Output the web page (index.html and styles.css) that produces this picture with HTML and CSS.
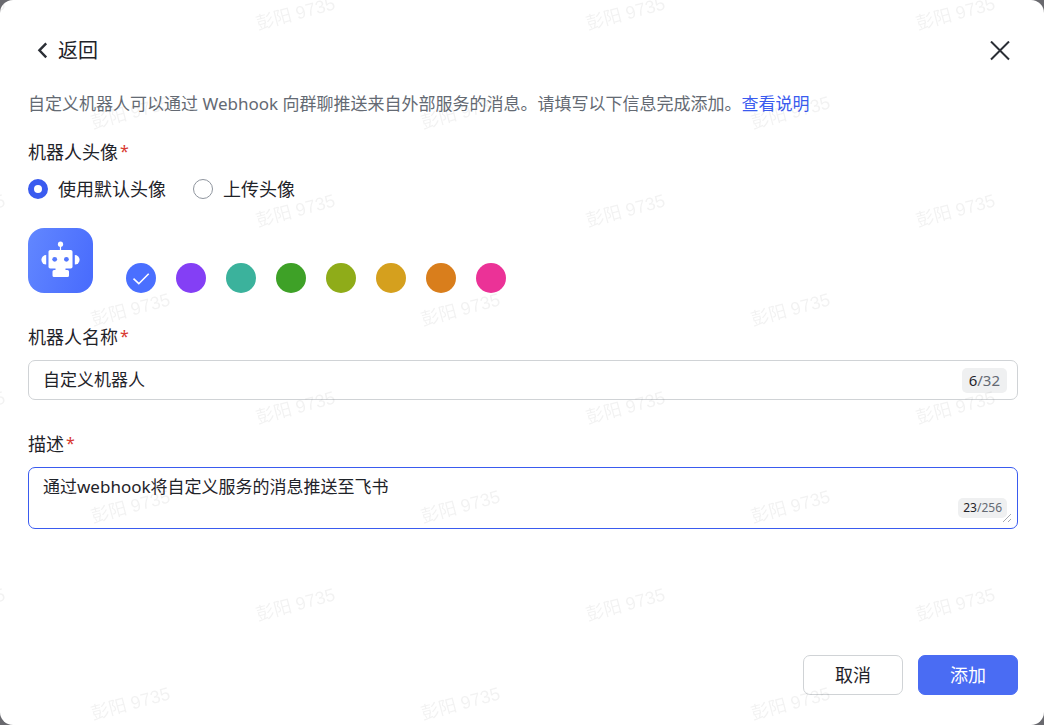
FILE: index.html
```html
<!DOCTYPE html>
<html lang="zh-CN">
<head>
<meta charset="utf-8">
<meta name="viewport" content="width=device-width, initial-scale=1">
<title>自定义机器人</title>
<link rel="stylesheet" href="styles.css">
</head>
<body>
<main class="dialog">
  <header class="header">
    <button class="back" type="button">
      <svg class="back-icon" viewBox="0 0 20 20" aria-hidden="true"><path d="M13.200 2.300 6.400 9.300l6.800 7"/></svg>
      <span>返回</span>
    </button>
    <button class="close" type="button" aria-label="关闭">
      <svg class="close-icon" viewBox="0 0 20 20" aria-hidden="true"><path d="M1 .5 19 18.500M19 .5 1 18.500"/></svg>
    </button>
  </header>

  <form class="form">
    <p class="intro">自定义机器人可以通过 Webhook 向群聊推送来自外部服务的消息。请填写以下信息完成添加。<a class="link" href="#">查看说明</a></p>

    <fieldset class="group">
      <legend class="label">机器人头像<span class="required">*</span></legend>
      <div class="options">
        <label class="option"><input class="radio" type="radio" name="source" checked><span>使用默认头像</span></label>
        <label class="option"><input class="radio" type="radio" name="source"><span>上传头像</span></label>
      </div>
      <div class="avatar-row">
        <svg class="avatar" viewBox="0 0 65 65" role="img" aria-label="机器人">
          <defs>
            <linearGradient id="avatar-fill" x1="0" y1="0.3" x2="1" y2="0.6">
              <stop offset="0" stop-color="#6085ff"/>
              <stop offset="1" stop-color="#4a6dfd"/>
            </linearGradient>
          </defs>
          <rect width="65" height="65" rx="16" fill="url(#avatar-fill)"/>
          <g fill="#fff">
            <circle cx="32.500" cy="16.200" r="2.600"/>
            <rect x="31.900" y="18" width="1.200" height="5"/>
            <rect x="20.500" y="22" width="24" height="18.500" rx="1.800"/>
            <path d="M18.200 27v9.600a4.800 4.800 0 0 1 0-9.600z"/>
            <path d="M46.800 27v9.600a4.800 4.800 0 0 0 0-9.600z"/>
            <path d="M27.500 40h10v2h2a1.500 1.500 0 0 1 1.500 1.500v4a1.500 1.500 0 0 1-1.500 1.500h-13.500a1.500 1.500 0 0 1-1.500-1.500v-4a1.500 1.500 0 0 1 1.500-1.500h1.500z"/>
          </g>
          <circle cx="26.700" cy="31.300" r="2.400" fill="#5579fe"/>
          <circle cx="38.400" cy="31.300" r="2.400" fill="#5276fe"/>
        </svg>
        <div class="swatches">
          <label class="swatch-item">
            <input class="swatch blue" type="radio" name="color" aria-label="蓝色" checked>
            <svg class="check" viewBox="0 0 30 30" aria-hidden="true"><path d="M7.500 15.700l5.300 5L22.700 10.800"/></svg>
          </label>
          <input class="swatch purple" type="radio" name="color" aria-label="紫色">
          <input class="swatch teal" type="radio" name="color" aria-label="青色">
          <input class="swatch green" type="radio" name="color" aria-label="绿色">
          <input class="swatch olive" type="radio" name="color" aria-label="黄绿色">
          <input class="swatch yellow" type="radio" name="color" aria-label="黄色">
          <input class="swatch orange" type="radio" name="color" aria-label="橙色">
          <input class="swatch pink" type="radio" name="color" aria-label="粉色">
        </div>
      </div>
    </fieldset>

    <div class="group">
      <label class="label" for="name">机器人名称<span class="required">*</span></label>
      <div class="field">
        <input class="input" id="name" type="text" value="自定义机器人" maxlength="32">
        <span class="count">6<span class="limit">/32</span></span>
      </div>
    </div>

    <div class="group">
      <label class="label" for="desc">描述<span class="required">*</span></label>
      <div class="field field-area">
        <textarea class="input area" id="desc" rows="2" maxlength="256">通过webhook将自定义服务的消息推送至飞书</textarea>
        <span class="count count-small">23<span class="limit">/256</span></span>
        <svg class="grip" viewBox="0 0 10 10" aria-hidden="true"><path d="M1 9 9 1M6 9 9 6"/></svg>
      </div>
    </div>

    <footer class="actions">
      <button class="button" type="button">取消</button>
      <button class="button primary" type="submit">添加</button>
    </footer>
  </form>

  <svg class="watermark" aria-hidden="true">
    <defs>
      <pattern id="mark" x="60" y="-20" width="330" height="197" patternUnits="userSpaceOnUse">
        <text class="mark-text" transform="translate(198 50) rotate(-15)">彭阳 9735</text>
        <text class="mark-text" transform="translate(33 149) rotate(-15)">彭阳 9735</text>
      </pattern>
    </defs>
    <rect width="100%" height="100%" fill="url(#mark)"/>
  </svg>
</main>
</body>
</html>
```
FILE: styles.css
```css
* {
  box-sizing: border-box;
}

body {
  margin: 0;
  background: #69696e;
  color: #1f2329;
  font-family: "Noto Sans", "Noto Sans CJK SC", sans-serif;
  font-size: 18px;
  line-height: 28px;
}

button,
input,
textarea {
  margin: 0;
  color: inherit;
  font: inherit;
}

button {
  cursor: pointer;
}

.dialog {
  position: relative;
  display: flex;
  flex-direction: column;
  min-height: 100vh;
  padding: 36px 26px 30px 28px;
  border-radius: 13px;
  background: #fff;
  overflow: hidden;
}

.header {
  display: flex;
  align-items: center;
  justify-content: space-between;
  height: 30px;
}

.back,
.close {
  display: flex;
  align-items: center;
  padding: 0;
  border: 0;
  background: none;
}

.back {
  padding-left: 5px;
  gap: 5px;
  font-size: 20px;
}

.back-icon {
  width: 20px;
  height: 20px;
  fill: none;
  stroke: #2b2f36;
  stroke-width: 2.4;
}

.close {
  padding-right: 8px;
}

.close-icon {
  width: 20px;
  height: 20px;
  fill: none;
  stroke: #2b2f36;
  stroke-width: 2;
}

.form {
  display: flex;
  flex: 1;
  flex-direction: column;
}

.intro {
  margin: 24px 0 20px;
  color: #646a73;
  font-size: 17px;
}

.link {
  color: #3a5bef;
  text-decoration: none;
}

.group {
  min-width: 0;
  margin: 0 0 30px;
  padding: 0;
  border: 0;
}

.label {
  display: block;
  margin-bottom: 9px;
  padding: 0;
}

.required {
  margin-left: 2px;
  color: #d83931;
  font-size: 16px;
  line-height: 16px;
  vertical-align: 2px;
}

.options {
  display: flex;
  gap: 27px;
}

.option {
  display: flex;
  align-items: center;
  gap: 10px;
}

.radio {
  width: 20px;
  height: 20px;
  border: 1px solid #8f959e;
  border-radius: 50%;
  background: #fff;
  appearance: none;
}

.radio:checked {
  border: 6px solid #3a5bef;
}

.avatar-row {
  display: flex;
  align-items: flex-end;
  margin-top: 25px;
  gap: 33px;
}

.avatar {
  width: 65px;
  height: 65px;
}

.swatches {
  display: flex;
  gap: 20px;
}

.swatch-item {
  display: grid;
}

.swatch-item > * {
  grid-area: 1 / 1;
}

.swatch {
  width: 30px;
  height: 30px;
  border-radius: 50%;
  appearance: none;
}

.check {
  width: 30px;
  height: 30px;
  fill: none;
  stroke: #fff;
  stroke-width: 1.6;
}

.blue { background: #4a6fff; }
.purple { background: #843ff5; }
.teal { background: #3bb29c; }
.green { background: #3ea127; }
.olive { background: #8fac19; }
.yellow { background: #d5a01e; }
.orange { background: #d97e1c; }
.pink { background: #eb3297; }

.field {
  position: relative;
  display: flex;
  align-items: center;
  height: 40px;
  padding: 0 10px 0 14px;
  border: 1px solid #d0d3d6;
  border-radius: 7px;
}

.field-area {
  height: auto;
  border-color: #3a5bef;
}

.input {
  flex: 1;
  min-width: 0;
  padding: 0;
  border: 0;
  outline: 0;
  background: none;
  font-size: 17px;
}

.area {
  height: 60px;
  padding: 5px 0;
  line-height: 28px;
  resize: none;
}

.count {
  padding: 0 7px;
  border-radius: 5px;
  background: #eff0f1;
  font-size: 15px;
  line-height: 25px;
}

.count-small {
  position: absolute;
  right: 10px;
  bottom: 10px;
  padding: 0 5px;
  font-size: 12px;
  line-height: 20px;
}

.limit {
  color: #646a73;
}

.grip {
  position: absolute;
  right: 5px;
  bottom: 5px;
  width: 10px;
  height: 10px;
  fill: none;
  stroke: #a6a9ae;
}

.actions {
  display: flex;
  justify-content: flex-end;
  margin-top: auto;
  gap: 15px;
}

.button {
  width: 100px;
  height: 40px;
  padding: 0;
  border: 1px solid #d0d3d6;
  border-radius: 7px;
  background: #fff;
}

.primary {
  border-color: #4a6cf3;
  background: #4a6cf3;
  color: #fff;
}

.watermark {
  position: absolute;
  inset: 0;
  width: 100%;
  height: 100%;
  pointer-events: none;
}

.mark-text {
  fill: #1f2329;
  fill-opacity: 0.06;
  font-family: "Liberation Sans", "Noto Sans CJK SC", sans-serif;
  font-size: 18px;
}
```
